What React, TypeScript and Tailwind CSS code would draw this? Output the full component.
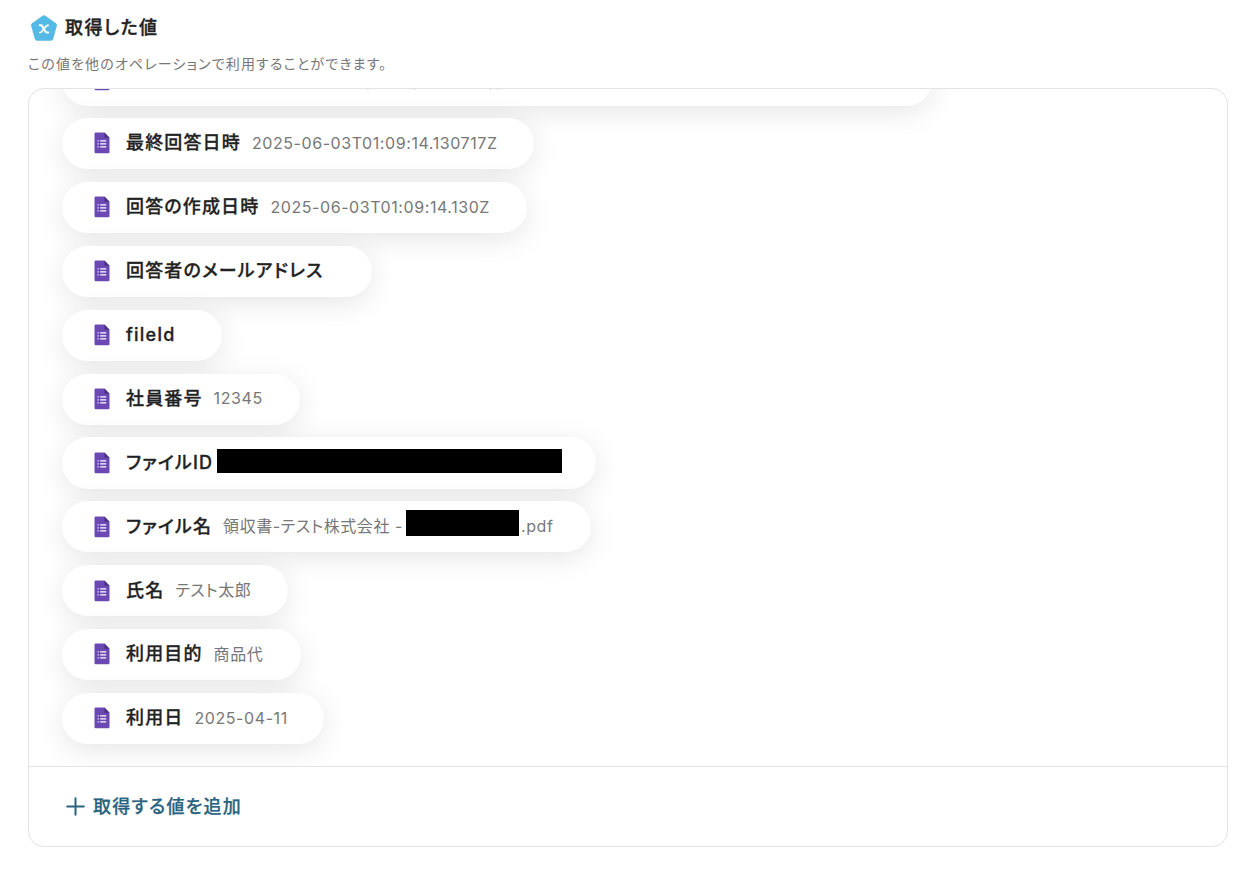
type Output = {
  label: string;
  value?: string;
  suffix?: string;
  // size and offset of the masked part of the value
  mask?: string;
  width: string;
};

const outputs: Output[] = [
  {
    label: "回答ID",
    value: "ACYDBNhK2mRwapTyLxvEjs8pUkWgyZ4oHMpcAnXe7RdVbSfKt31uLzPmBwNhrCa0Dipoxk",
    width: "w-[870px]",
  },
  { label: "最終回答日時", value: "2025-06-03T01:09:14.130717Z", width: "w-[472px]" },
  { label: "回答の作成日時", value: "2025-06-03T01:09:14.130Z", width: "w-[465px]" },
  { label: "回答者のメールアドレス", width: "w-[310px]" },
  { label: "fileId", width: "w-[160px]" },
  { label: "社員番号", value: "12345", width: "w-[238px]" },
  { label: "ファイルID", mask: "ml-1 -mt-[3.4px] h-6 w-[345px]", width: "w-[534px]" },
  {
    label: "ファイル名",
    value: "領収書-テスト株式会社 -",
    mask: "ml-[3px] -mt-[8px] h-[26px] w-[113px]",
    suffix: ".pdf",
    width: "w-[529px]",
  },
  { label: "氏名", value: "テスト太郎", width: "w-[226px]" },
  { label: "利用目的", value: "商品代", width: "w-[239px]" },
  { label: "利用日", value: "2025-04-11", width: "w-[262px]" },
];

function ValueBadge() {
  return (
    <svg width="28" height="28" viewBox="0 0 28 28" className="shrink-0">
      <path
        d="M14 3.6 24.6 11.2 20.8 24.4H7.2L3.4 11.2Z"
        fill="#55b9e6"
        stroke="#55b9e6"
        strokeWidth="4.8"
        strokeLinejoin="round"
      />
      <path
        d="M9.8 11.3H10.8Q11.8 11.3 12.3 12.2L15.4 17.6Q15.9 18.5 16.9 18.5H18.2"
        fill="none"
        stroke="#fff"
        strokeWidth="2.1"
        strokeLinecap="round"
      />
      <path
        d="M18.2 11.3H17.6Q16.8 11.3 16.2 12.1L11.6 17.7Q11 18.5 10.2 18.5H9.8"
        fill="none"
        stroke="#fff"
        strokeWidth="1.7"
        strokeLinecap="round"
      />
    </svg>
  );
}

function FormIcon() {
  return (
    <svg width="16" height="22" viewBox="0 0 16 22" className="-mt-[0.4px] shrink-0">
      <path d="M1.8 .5H10.5L15.5 5.7V20a1.3 1.3 0 0 1-1.3 1.3H1.8A1.3 1.3 0 0 1 .5 20V1.8A1.3 1.3 0 0 1 1.8 .5Z" fill="#6c48b5" />
      <path d="M10.5 .5 15.5 5.7H10.5Z" fill="#4b3182" />
      <path d="M6.2 8.9h6M6.2 11.9h6M6.2 14.9h6" stroke="#fff" strokeWidth="1.1" />
      <path d="M3.6 8.9h1.2M3.6 11.9h1.2M3.6 14.9h1.2" stroke="#fff" strokeWidth="1.1" />
    </svg>
  );
}

function OutputChip({ output }: { output: Output }) {
  return (
    <div
      className={`flex h-[51.15px] shrink-0 items-center rounded-full bg-white pl-8 whitespace-nowrap shadow-[0_6px_28px_rgba(0,0,0,0.1)] first:-mb-[0.7px] ${output.width}`}
    >
      <FormIcon />
      <span className="-mt-[0.4px] ml-4 text-[18px] leading-6 font-medium tracking-[0.064em] text-[#222] [-webkit-text-stroke:0.3px]">
        {output.label}
      </span>
      {output.value && (
        <span className="-mt-[1.5px] ml-[11px] text-[16px] leading-6 tracking-[0.036em] text-[#777]">
          {output.value}
        </span>
      )}
      {output.mask && <span className={`shrink-0 bg-black ${output.mask}`} />}
      {output.suffix && (
        <span className="-mt-[1.5px] ml-0.5 text-[16px] leading-6 tracking-[0.036em] text-[#777]">
          {output.suffix}
        </span>
      )}
    </div>
  );
}

export default function App() {
  return (
    <div className="h-[876px] bg-white px-7 pt-[14px] font-['Inter','Noto_Sans_CJK_JP',sans-serif] [font-feature-settings:'palt']">
      <div className="flex h-7 items-center gap-[7px] pl-0.5">
        <ValueBadge />
        <h2 className="text-[18px] leading-7 font-medium tracking-[0.078em] text-[#222] [-webkit-text-stroke:0.35px]">
          取得した値
        </h2>
      </div>
      <p className="mt-3 h-5 text-[14px] leading-5 tracking-[0.082em] text-[#777]">
        この値を他のオペレーションで利用することができます。
      </p>

      <div className="mt-[14px] flex h-[759px] w-[1200px] flex-col overflow-hidden rounded-2xl border border-[#e3e3e3]">
        {/* Value list, scrolled to its end */}
        <div className="flex h-[677px] shrink-0 flex-col items-start justify-end gap-[12.74px] overflow-hidden pb-[21.9px] pl-[33px]">
          {outputs.map((output) => (
            <OutputChip key={output.label} output={output} />
          ))}
        </div>

        <div className="flex flex-1 items-center border-t border-[#e3e3e3] pl-[37px]">
          <button className="flex items-center gap-2 text-[18px] leading-6 font-medium tracking-[0.07em] text-[#2a637f]">
            <svg width="19" height="19" viewBox="0 0 19 19">
              <path d="M9.5 1.2v16.6M1.2 9.5h16.6" stroke="currentColor" strokeWidth="2" strokeLinecap="round" />
            </svg>
            <span className="[-webkit-text-stroke:0.25px]">取得する値を追加</span>
          </button>
        </div>
      </div>
    </div>
  );
}
